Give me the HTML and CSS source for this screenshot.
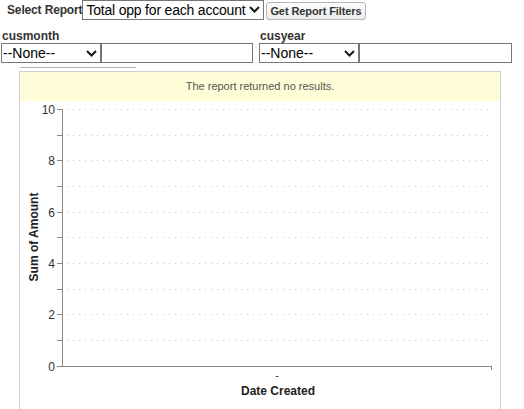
FILE: index.html
```html
<!DOCTYPE html>
<html>
<head>
<meta charset="utf-8">
<link rel="stylesheet" href="styles.css">
</head>
<body>
<div class="report-bar">
  <span class="bar-label">Select Report</span>
  <span class="select-wrap">
    <select class="report-select"><option>Total opp for each account</option></select>
    <svg class="chev" width="11" height="7" viewBox="0 0 11 7"><polyline points="1,1 5.5,5.5 10,1" fill="none" stroke="#1a1a1a" stroke-width="2"/></svg>
  </span>
  <button class="filters-btn">Get Report Filters</button>
</div>
<div class="filters">
  <div class="filter">
    <div class="filter-label">cusmonth</div>
    <div class="filter-controls">
      <span class="select-wrap">
        <select class="filter-select"><option>--None--</option></select>
        <svg class="chev" width="11" height="7" viewBox="0 0 11 7"><polyline points="1,1 5.5,5.5 10,1" fill="none" stroke="#1a1a1a" stroke-width="2"/></svg>
      </span><input class="filter-input" type="text">
    </div>
  </div>
  <div class="filter">
    <div class="filter-label">cusyear</div>
    <div class="filter-controls">
      <span class="select-wrap">
        <select class="filter-select"><option>--None--</option></select>
        <svg class="chev" width="11" height="7" viewBox="0 0 11 7"><polyline points="1,1 5.5,5.5 10,1" fill="none" stroke="#1a1a1a" stroke-width="2"/></svg>
      </span><input class="filter-input wide" type="text">
    </div>
  </div>
</div>
<div class="tab-edge"></div>
<div class="chart-box">
  <div class="no-results">The report returned no results.</div>
  <svg class="chart" width="480" height="310" viewBox="0 0 480 310">
    <g class="grid" stroke="#c8c8c8" stroke-width="1" stroke-dasharray="1 5">
      <line x1="47" y1="8.5" x2="472" y2="8.5"/>
      <line x1="47" y1="34.5" x2="472" y2="34.5"/>
      <line x1="47" y1="59.5" x2="472" y2="59.5"/>
      <line x1="47" y1="85.5" x2="472" y2="85.5"/>
      <line x1="47" y1="111.5" x2="472" y2="111.5"/>
      <line x1="47" y1="136.5" x2="472" y2="136.5"/>
      <line x1="47" y1="162.5" x2="472" y2="162.5"/>
      <line x1="47" y1="188.5" x2="472" y2="188.5"/>
      <line x1="47" y1="213.5" x2="472" y2="213.5"/>
      <line x1="47" y1="239.5" x2="472" y2="239.5"/>
    </g>
    <g class="axis" stroke="#888" stroke-width="1">
      <line x1="42.5" y1="8" x2="42.5" y2="265"/>
      <line x1="42" y1="265.5" x2="472" y2="265.5"/>
      <line x1="471.5" y1="265" x2="471.5" y2="269"/>
      <line x1="37" y1="8.5" x2="42" y2="8.5"/>
      <line x1="37" y1="34.5" x2="42" y2="34.5"/>
      <line x1="37" y1="59.5" x2="42" y2="59.5"/>
      <line x1="37" y1="85.5" x2="42" y2="85.5"/>
      <line x1="37" y1="111.5" x2="42" y2="111.5"/>
      <line x1="37" y1="136.5" x2="42" y2="136.5"/>
      <line x1="37" y1="162.5" x2="42" y2="162.5"/>
      <line x1="37" y1="188.5" x2="42" y2="188.5"/>
      <line x1="37" y1="213.5" x2="42" y2="213.5"/>
      <line x1="37" y1="239.5" x2="42" y2="239.5"/>
      <line x1="37" y1="265.5" x2="42" y2="265.5"/>
    </g>
    <g class="ticks" font-family="Arial, 'Liberation Sans', sans-serif" font-size="12" fill="#333" text-anchor="end">
      <text x="35" y="13">10</text>
      <text x="35" y="64">8</text>
      <text x="35" y="116">6</text>
      <text x="35" y="167">4</text>
      <text x="35" y="218">2</text>
      <text x="35" y="270">0</text>
    </g>
    <text x="257" y="278" font-family="Arial, 'Liberation Sans', sans-serif" font-size="11" fill="#333" text-anchor="middle">-</text>
    <text x="258" y="294" font-family="Arial, 'Liberation Sans', sans-serif" font-size="12" font-weight="bold" fill="#222" text-anchor="middle">Date Created</text>
    <text transform="translate(18 136) rotate(-90)" font-family="Arial, 'Liberation Sans', sans-serif" font-size="12" font-weight="bold" fill="#222" text-anchor="middle">Sum of Amount</text>
  </svg>
</div>
</body>
</html>
```
FILE: styles.css
```css
html, body {
  margin: 0;
  padding: 0;
  background: #fff;
  font-family: Arial, "Liberation Sans", sans-serif;
  color: #222;
}
.report-bar {
  display: flex;
  align-items: center;
  height: 20px;
  padding-left: 7px;
}
.bar-label {
  font-size: 12px;
  font-weight: bold;
  color: #333;
  letter-spacing: -0.15px;
}
.select-wrap {
  position: relative;
  display: inline-block;
}
.chev {
  position: absolute;
  right: 4px;
  top: 6px;
  pointer-events: none;
}
.report-select,
.filter-select {
  -webkit-appearance: none;
  appearance: none;
  box-sizing: border-box;
  display: block;
  height: 20px;
  margin: 0;
  font-family: Arial, "Liberation Sans", sans-serif;
  font-size: 14px;
  color: #000;
  border: 1px solid #767676;
  border-radius: 0;
  background: #fff;
  padding: 0 0 0 2px;
  line-height: 18px;
}
.report-select {
  width: 182px;
  padding-left: 3px;
  letter-spacing: -0.2px;
}
.filters-btn {
  box-sizing: border-box;
  margin: 1px 0 0 2px;
  height: 18px;
  padding: 0 3px;
  font-family: Arial, "Liberation Sans", sans-serif;
  font-size: 11px;
  font-weight: bold;
  color: #333;
  letter-spacing: -0.1px;
  background: linear-gradient(#fdfdfd, #ececec);
  border: 1px solid #b5b5b5;
  border-radius: 3px;
}
.filters {
  display: flex;
  gap: 6px;
  padding-left: 1px;
  margin-top: 9px;
}
.filter-label {
  font-size: 12px;
  font-weight: bold;
  color: #333;
  height: 14px;
  line-height: 14px;
  padding-left: 1px;
}
.filter-controls {
  display: flex;
}
.filter-select {
  width: 100px;
  padding-left: 1px;
}
.filter-controls .chev {
  top: 7px;
}
.filter-input {
  box-sizing: border-box;
  width: 152px;
  height: 20px;
  margin: 0;
  border: 1px solid #767676;
  border-radius: 0;
  padding: 0;
}
.filter-input.wide {
  width: 153px;
}
.tab-edge {
  margin: 4px 0 0 20px;
  width: 116px;
  height: 1px;
  background: #b4b4b4;
}
.chart-box {
  margin: 3px 0 0 19px;
  width: 480px;
  height: 340px;
  border: 1px solid #cfcfcf;
  border-bottom: none;
}
.no-results {
  height: 29px;
  line-height: 29px;
  background: #fffdd7;
  text-align: center;
  font-size: 11px;
  color: #555;
}
.chart {
  display: block;
}
```
